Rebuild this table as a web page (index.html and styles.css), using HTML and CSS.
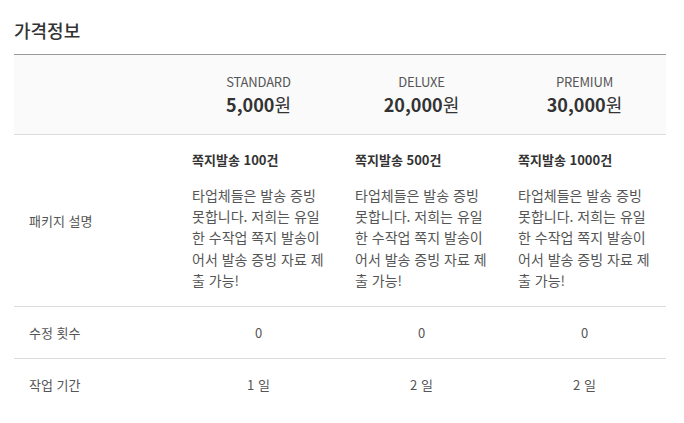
FILE: index.html
```html
<!DOCTYPE html>
<html lang="ko">
<head>
<meta charset="utf-8">
<link rel="stylesheet" href="styles.css">
</head>
<body>
<h2 class="title">가격정보</h2>
<table class="price-table">
  <thead>
    <tr>
      <th class="label"></th>
      <th><div class="plan">STANDARD</div><div class="price">5,000<span class="won">원</span></div></th>
      <th><div class="plan">DELUXE</div><div class="price">20,000<span class="won">원</span></div></th>
      <th><div class="plan">PREMIUM</div><div class="price">30,000<span class="won">원</span></div></th>
    </tr>
  </thead>
  <tbody>
    <tr class="desc-row">
      <td class="label">패키지 설명</td>
      <td class="desc"><div class="desc-title">쪽지발송 100건</div><p>타업체들은 발송 증빙<br>못합니다. 저희는 유일<br>한 수작업 쪽지 발송이<br>어서 발송 증빙 자료 제<br>출 가능!</p></td>
      <td class="desc"><div class="desc-title">쪽지발송 500건</div><p>타업체들은 발송 증빙<br>못합니다. 저희는 유일<br>한 수작업 쪽지 발송이<br>어서 발송 증빙 자료 제<br>출 가능!</p></td>
      <td class="desc"><div class="desc-title">쪽지발송 1000건</div><p>타업체들은 발송 증빙<br>못합니다. 저희는 유일<br>한 수작업 쪽지 발송이<br>어서 발송 증빙 자료 제<br>출 가능!</p></td>
    </tr>
    <tr class="row">
      <td class="label">수정 횟수</td>
      <td class="val">0</td>
      <td class="val">0</td>
      <td class="val">0</td>
    </tr>
    <tr class="row last">
      <td class="label">작업 기간</td>
      <td class="val">1 일</td>
      <td class="val">2 일</td>
      <td class="val">2 일</td>
    </tr>
  </tbody>
</table>
</body>
</html>
```

FILE: styles.css
```css
html, body {
  margin: 0;
  padding: 0;
  background: #fff;
}
body {
  padding: 17px 14px 0 14px;
  font-family: "Noto Sans CJK KR", "Noto Sans", sans-serif;
  color: #555;
}
.title {
  margin: 0 0 11px 0;
  font-size: 18px;
  line-height: 26px;
  font-weight: 500;
  color: #333;
}
.price-table {
  width: 652px;
  table-layout: fixed;
  border-collapse: collapse;
  border-top: 1px solid #999;
}
.price-table th,
.price-table td {
  padding: 0 15px;
}
.price-table thead th {
  background: #fafafa;
  height: 79px;
  border-bottom: 1px solid #ddd;
  text-align: center;
  font-weight: 400;
  vertical-align: middle;
}
.plan {
  font-size: 13px;
  line-height: 18px;
  color: #555;
  letter-spacing: -0.2px;
}
.price {
  font-size: 18px;
  line-height: 26px;
  font-weight: 700;
  color: #333;
}
.won {
  font-weight: 400;
}
.label {
  text-align: left;
  font-size: 13px;
  color: #555;
}
.desc-row td {
  border-bottom: 1px solid #ddd;
  height: 171px;
  vertical-align: middle;
}
.desc {
  font-size: 13px;
}
.desc-title {
  font-weight: 700;
  color: #333;
  line-height: 20px;
  margin-bottom: 15px;
}
.desc p {
  margin: 0;
  font-size: 14px;
  line-height: 21.3px;
  white-space: nowrap;
  color: #555;
}
.row td {
  height: 51px;
  border-bottom: 1px solid #ddd;
  font-size: 13px;
}
.row.last td {
  border-bottom: none;
}
.val {
  text-align: center;
}
```
